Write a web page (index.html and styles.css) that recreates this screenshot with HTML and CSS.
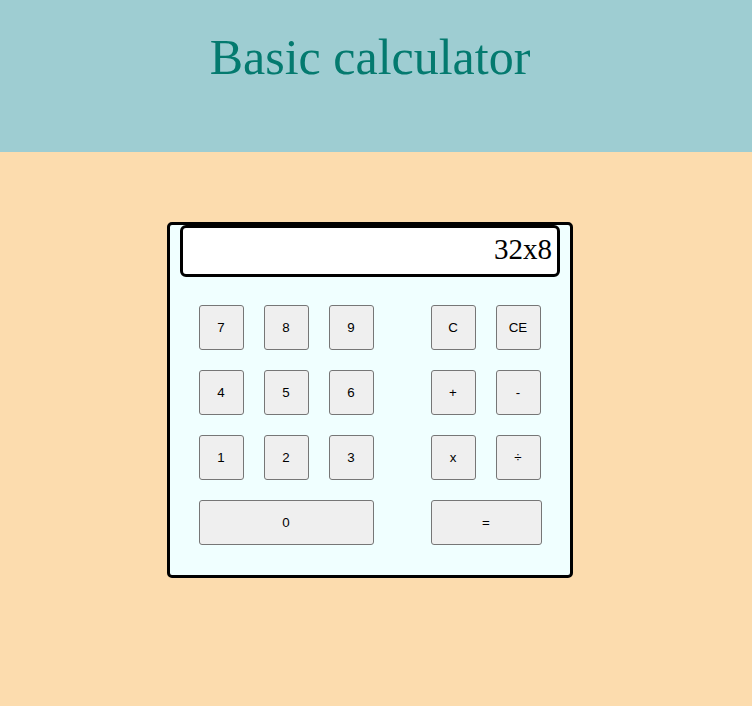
FILE: index.html
```html
<!DOCTYPE html>
<html>
<head>
<meta charset="utf-8">
<link rel="stylesheet" href="styles.css">
</head>
<body>
<header class="header">
  <h1 class="title">Basic calculator</h1>
</header>
<main class="main">
  <div class="calc">
    <div class="display">32x8</div>
    <div class="keys">
      <div class="digits">
        <button class="key">7</button>
        <button class="key">8</button>
        <button class="key">9</button>
        <button class="key">4</button>
        <button class="key">5</button>
        <button class="key">6</button>
        <button class="key">1</button>
        <button class="key">2</button>
        <button class="key">3</button>
        <button class="key key-zero">0</button>
      </div>
      <div class="ops">
        <button class="key">C</button>
        <button class="key">CE</button>
        <button class="key">+</button>
        <button class="key">-</button>
        <button class="key">x</button>
        <button class="key">÷</button>
        <button class="key key-eq">=</button>
      </div>
    </div>
  </div>
</main>
</body>
</html>
```

FILE: styles.css
```css
html, body {
  margin: 0;
  padding: 0;
}
body {
  background: #fcdcae;
  width: 752px;
  height: 706px;
  overflow: hidden;
}
.header {
  background: #9ecdd2;
  height: 152px;
  width: 740px;
  box-shadow: 12px 0 0 #9ecdd2;
  display: flex;
  justify-content: center;
}
.title {
  margin: 27px 0 0 0;
  font-family: "Liberation Serif", serif;
  font-weight: normal;
  font-size: 50px;
  line-height: 60px;
  color: #047a6f;
}
.main {
  width: 740px;
  display: flex;
  justify-content: center;
  padding-top: 70px;
}
.calc {
  width: 400px;
  height: 350px;
  border: 3px solid #000;
  border-radius: 5px;
  background: #f0ffff;
  display: flex;
  flex-direction: column;
  align-items: center;
}
.display {
  width: 369px;
  height: 46px;
  box-sizing: content-box;
  margin-top: 0;
  background: #fff;
  border: 3px solid #000;
  border-radius: 6px;
  font-family: "Liberation Serif", serif;
  font-size: 29px;
  line-height: 43px;
  text-align: right;
  padding-right: 5px;
}
.keys {
  display: flex;
  gap: 57px;
  margin-top: 28px;
  width: 343px;
}
.digits, .ops {
  display: grid;
  grid-auto-rows: 45px;
  row-gap: 20px;
  column-gap: 20px;
}
.digits {
  grid-template-columns: 45px 45px 45px;
}
.ops {
  grid-template-columns: 45px 45px;
}
.key {
  margin: 0;
  padding: 0;
  background: #efefef;
  border: 1px solid #767676;
  border-radius: 3px;
  font-family: "Liberation Sans", Arial, sans-serif;
  font-size: 13.33px;
  color: #000;
}
.key-zero {
  grid-column: 1 / span 3;
}
.key-eq {
  grid-column: 1 / span 2;
  width: 111px;
}
```
